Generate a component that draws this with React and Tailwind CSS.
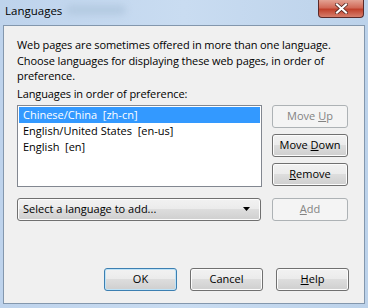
export default function App() {
  const btn =
    "h-[23px] rounded-[3px] border border-[#707070] bg-[linear-gradient(#f2f2f2_0%,#ebebeb_49%,#dddddd_50%,#cfcfcf_100%)] shadow-[inset_0_0_0_1px_#fcfcfc] text-black flex items-center justify-center whitespace-pre";
  const dis =
    "h-[23px] rounded-[3px] border border-[#adb2b5] bg-[#f4f4f4] text-[#838383] flex items-center justify-center whitespace-pre";
  return (
    <div
      className="w-[368px] h-[308px] bg-[linear-gradient(90deg,#bed3ec_0%,#c9dcf1_50%,#bcd2ea_100%)] flex flex-col text-[11px] text-black"
      style={{ fontFamily: '"Open Sans", "Noto Sans", sans-serif' }}
    >
      <div className="h-[25px] flex items-start relative">
        <div className="pl-[5px] pt-[3px] text-[11.5px] text-black leading-[16px]">Languages</div>
        <div className="ml-[4px] mt-[5px] w-[60px] h-[10px] rounded-full bg-[#b5cbe2] blur-[3px]" />
        <div className="absolute right-[4px] top-0 w-[46px] h-[18px] rounded-b-[4px] border border-t-0 border-[#5a2a2a] bg-[linear-gradient(#e3a293_0%,#d16a58_45%,#c0412c_55%,#d67e6c_100%)] flex items-center justify-center">
          <svg width="13" height="11" viewBox="0 0 13 11">
            <path d="M2 1.5 L11 9.5 M11 1.5 L2 9.5" stroke="#4a1f1a" strokeWidth="3.6" strokeLinecap="square" />
            <path d="M2 1.5 L11 9.5 M11 1.5 L2 9.5" stroke="#ffffff" strokeWidth="2.2" strokeLinecap="square" />
          </svg>
        </div>
      </div>
      <div className="mx-[3px] h-[279px] border border-[#8397ad] bg-[#f0f0f0] flex flex-col pl-[13px] pr-[15px]">
        <p className="mt-[11px] leading-[15.5px] tracking-[-0.1px]">
          Web pages are sometimes offered in more than one language. Choose languages for displaying these web pages, in order of preference.
        </p>
        <p className="mt-[2px] leading-[16px] tracking-[-0.1px]">Languages in order of preference:</p>
        <div className="mt-[3px] flex gap-[10px]">
          <div className="w-[245px] h-[82px] border border-[#828790] bg-white p-[1px]">
            <div className="h-[16px] bg-[#3399ff] text-white pl-[4px] leading-[16px] whitespace-pre">Chinese/China  [zh-cn]</div>
            <div className="h-[16px] pl-[4px] leading-[16px] whitespace-pre">English/United States  [en-us]</div>
            <div className="h-[16px] pl-[4px] leading-[16px] whitespace-pre">English  [en]</div>
          </div>
          <div className="flex flex-col gap-[6px] w-[76px]">
            <div className={dis}><span>Move </span><span className="underline">U</span><span>p</span></div>
            <div className={btn}><span>Move </span><span className="underline">D</span><span>own</span></div>
            <div className={btn}><span className="underline">R</span><span>emove</span></div>
          </div>
        </div>
        <div className="mt-[11px] flex gap-[11px]">
          <div className="w-[244px] h-[23px] rounded-[3px] border border-[#707070] bg-[linear-gradient(#f2f2f2_0%,#ebebeb_49%,#dddddd_50%,#cfcfcf_100%)] shadow-[inset_0_0_0_1px_#fcfcfc] flex items-center pl-[5px] pr-[10px]">
            <span className="flex-1">Select a language to add...</span>
            <svg width="7" height="4" viewBox="0 0 7 4"><path d="M0 0 H7 L3.5 4 Z" fill="#000" /></svg>
          </div>
          <div className={dis + " w-[76px]"}><span className="underline">A</span><span>dd</span></div>
        </div>
        <div className="mt-[47px] flex justify-end gap-[13px]">
          <div className="w-[73px] h-[23px] rounded-[3px] border border-[#3c7fb1] bg-[linear-gradient(#f2f2f2_0%,#ebebeb_49%,#dddddd_50%,#cfcfcf_100%)] shadow-[inset_0_0_0_1px_#bfe3f7] flex items-center justify-center">OK</div>
          <div className={btn + " w-[73px]"}>Cancel</div>
          <div className={btn + " w-[73px]"}><span className="underline">H</span><span>elp</span></div>
        </div>
      </div>
    </div>
  );
}
